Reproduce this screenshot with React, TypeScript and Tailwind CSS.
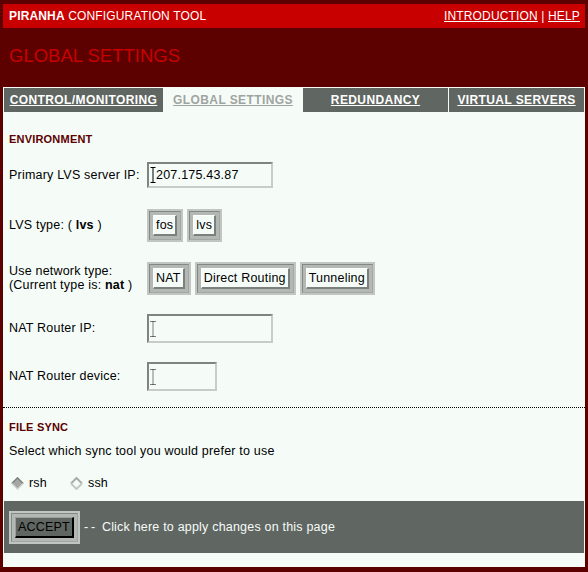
import { FC, ReactNode } from "react";

const tabs = [
  { label: "CONTROL/MONITORING", width: "w-[159px]", active: false },
  { label: "GLOBAL SETTINGS", width: "w-[138px]", active: true },
  { label: "REDUNDANCY", width: "w-[145px]", active: false },
  { label: "VIRTUAL SERVERS", width: "w-[135px]", active: false },
];

// old-style beveled form button, framed by a sunken grey box
const Btn: FC<{ children: ReactNode; dark?: boolean }> = ({ children, dark }) => (
  <span className="inline-flex border-2 border-[#c2c6c2] bg-[#b4b8b4]">
    <span className="inline-flex border border-t-[#848884] border-l-[#848884] border-r-[#a4a8a4] border-b-[#a4a8a4] p-[3px]">
      <span
        className={
          dark
            ? "border-t border-l border-t-[#9a9e9a] border-l-[#9a9e9a] border-r-2 border-b-2 border-r-black border-b-black bg-[#606662] px-[2px] leading-[18px] text-black"
            : "border-t border-l border-white border-r-2 border-b-2 border-r-[#7c807c] border-b-[#7c807c] bg-[#f5fcf8] px-[2px] leading-[18px] text-black"
        }
      >
        {children}
      </span>
    </span>
  </span>
);

const IBeam: FC<{ dotted?: boolean }> = ({ dotted }) => (
  <svg width="6" height="16" viewBox="0 0 6 16" className="shrink-0">
    <path
      d="M0.5 0.5 H5.5 M3 0.5 V15.5 M0.5 15.5 H5.5"
      stroke="#000"
      strokeWidth="1"
      strokeDasharray={dotted ? "1 1" : undefined}
      fill="none"
    />
  </svg>
);

const Field: FC<{ className: string; value?: string }> = ({ className, value }) => (
  <div
    className={`flex items-center border-2 border-t-[#808480] border-l-[#808480] border-r-[#c8ccc8] border-b-[#c8ccc8] bg-[#f5fcf8] pl-[1px] ${className}`}
  >
    <IBeam dotted={!value} />
    {value && <span className="text-black">{value}</span>}
  </div>
);

const Radio: FC<{ checked?: boolean }> = ({ checked }) => (
  <svg width="13" height="13" viewBox="0 0 13 13">
    {checked ? (
      <>
        <polygon points="6.5,0.5 12.5,6.5 6.5,12.5 0.5,6.5" fill="#a4a8a4" />
        <path d="M0.8 6.5 L6.5 0.8 L12.2 6.5" stroke="#7c807c" strokeWidth="1.4" fill="none" />
        <path d="M0.8 6.5 L6.5 12.2 L12.2 6.5" stroke="#d4d8d4" strokeWidth="1.4" fill="none" />
      </>
    ) : (
      <>
        <polygon points="6.5,1.5 11.5,6.5 6.5,11.5 1.5,6.5" fill="#f5fcf8" />
        <path d="M1 6.5 L6.5 1 L12 6.5" stroke="#a8aca8" strokeWidth="2" fill="none" />
        <path d="M1 6.5 L6.5 12 L12 6.5" stroke="#c4c8c4" strokeWidth="2" fill="none" />
      </>
    )}
  </svg>
);

const Row: FC<{ label: ReactNode; height: string; children: ReactNode }> = ({ label, height, children }) => (
  <div className={`flex items-center pl-[6px] ${height}`}>
    <div className="w-[138px] shrink-0">{label}</div>
    <div className="flex items-center gap-[4px]">{children}</div>
  </div>
);

export default function App() {
  return (
    <div className="w-[588px] h-[572px] overflow-hidden bg-[#5c0000] px-[3px] pt-[4px] font-['Liberation_Sans',Arial,sans-serif]">
      <div className="flex h-[24px] items-center justify-between bg-[#c80000] pl-[6px] pr-[5px] text-[12px] tracking-[0.15px] text-white">
        <div>
          <b>PIRANHA</b> CONFIGURATION TOOL
        </div>
        <div>
          <a className="underline">INTRODUCTION</a> | <a className="underline">HELP</a>
        </div>
      </div>

      <div className="flex h-[59px] items-center pb-[3px] pl-[6px] text-[18.5px] text-[#c80000]">GLOBAL SETTINGS</div>

      <div className="h-[480px] bg-[#f5fcf8] text-[12.5px] tracking-[0.2px] text-black">
        <div className="flex gap-px px-px pt-px text-[12px] font-bold tracking-[0.4px]">
          {tabs.map((t) => (
            <div
              key={t.label}
              className={`flex h-[24px] items-center justify-center ${t.width} ${
                t.active ? "text-[#a0a4a0]" : "bg-[#606662] text-white"
              }`}
            >
              <a className="underline">{t.label}</a>
            </div>
          ))}
        </div>

        <div className="mt-[18px] flex h-[18px] items-center pl-[6px] text-[11px] font-bold text-[#5c0000]">ENVIRONMENT</div>

        <Row label="Primary LVS server IP:" height="h-[54px]">
          <Field className="h-[26px] w-[126px]" value="207.175.43.87" />
        </Row>
        <Row
          label={
            <>
              LVS type: ( <b>lvs</b> )
            </>
          }
          height="h-[47px]"
        >
          <Btn>fos</Btn>
          <Btn>lvs</Btn>
        </Row>
        <Row
          label={
            <div className="leading-[14px]">
              Use network type:
              <br />
              (Current type is: <b>nat</b> )
            </div>
          }
          height="h-[58px]"
        >
          <Btn>NAT</Btn>
          <Btn>Direct Routing</Btn>
          <Btn>Tunneling</Btn>
        </Row>
        <Row label="NAT Router IP:" height="h-[43px]">
          <Field className="h-[29px] w-[126px]" />
        </Row>
        <Row label="NAT Router device:" height="h-[53px]">
          <Field className="h-[29px] w-[70px]" />
        </Row>

        <div className="mt-[4px] border-t border-dotted border-black" />

        <div className="mt-[10px] flex h-[18px] items-center pl-[6px] text-[11px] font-bold text-[#5c0000]">FILE SYNC</div>
        <div className="mt-[6px] flex h-[18px] items-center pl-[6px]">Select which sync tool you would prefer to use</div>
        <div className="mt-[14px] flex h-[18px] items-center pl-[8px]">
          <Radio checked />
          <span className="ml-[5px]">rsh</span>
          <span className="ml-[23px] flex">
            <Radio />
          </span>
          <span className="ml-[5px]">ssh</span>
        </div>

        <div className="mx-px mt-[9px] flex h-[52px] items-center bg-[#606662] pl-[5px]">
          <Btn dark>ACCEPT</Btn>
          <span className="ml-[4px] text-[#f5fcf8]">
            <span className="tracking-[3px]">--</span> Click here to apply changes on this page
          </span>
        </div>
      </div>
    </div>
  );
}
